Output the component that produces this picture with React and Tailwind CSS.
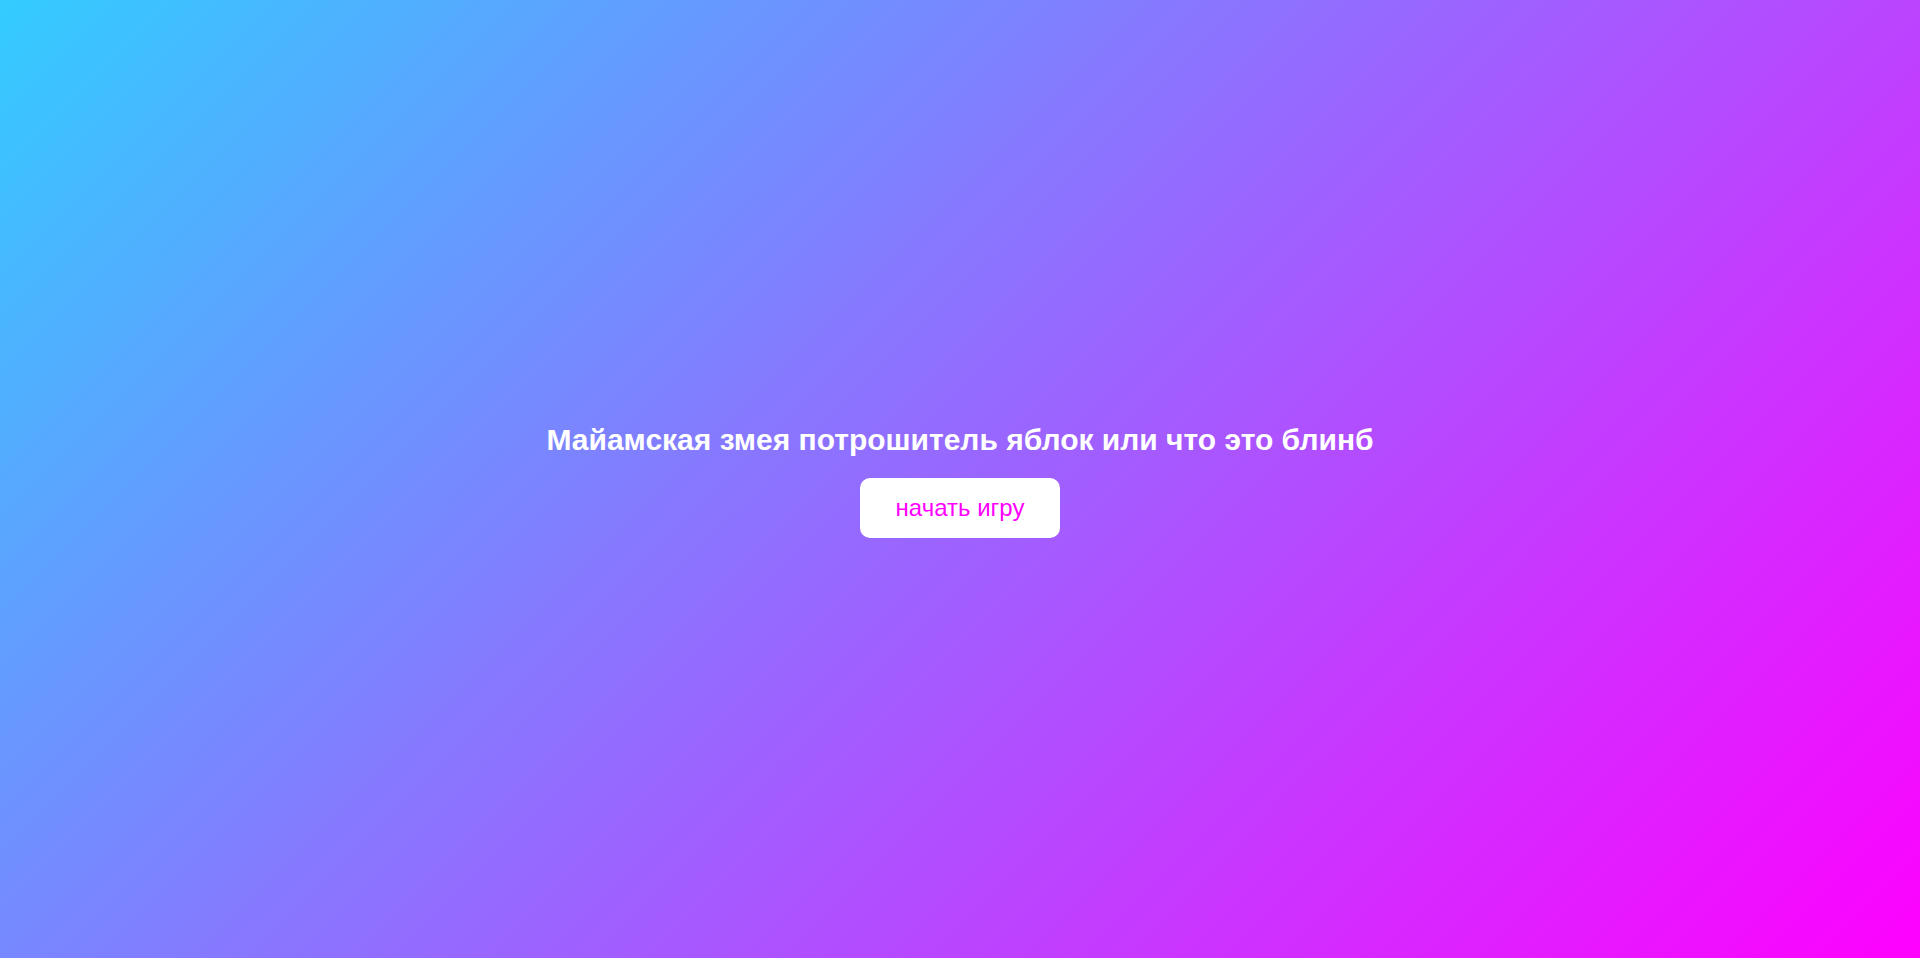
export default function App() {
  return (
    <div className="flex h-screen w-full flex-col items-center justify-center bg-[linear-gradient(135deg,#33ccff,#ff00ff)] font-['Liberation_Sans',Arial,sans-serif]">
      <h1 className="text-[30px] font-bold leading-[40px] text-white">
        Майамская змея потрошитель яблок или что это блинб
      </h1>
      <button className="mt-[18px] h-[60px] w-[200px] rounded-[10px] bg-white text-[24px] text-[#ff00ff]">
        начать игру
      </button>
    </div>
  );
}
